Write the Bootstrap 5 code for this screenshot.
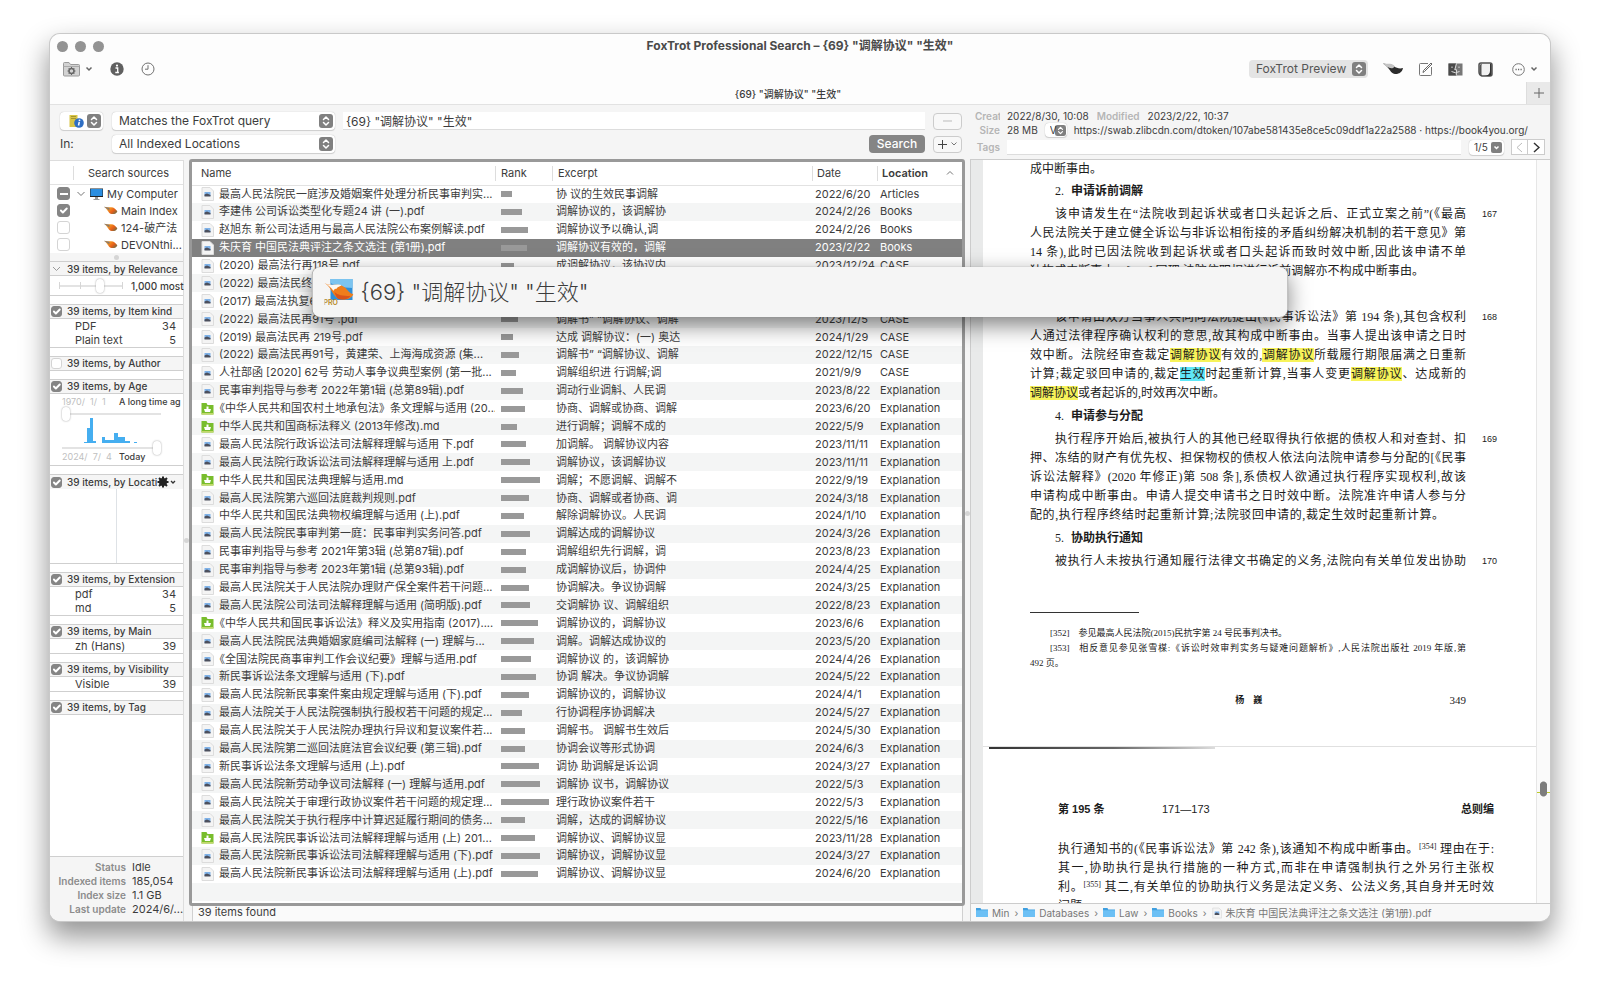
<!DOCTYPE html>
<html lang="zh-Hans">
<head>
<meta charset="utf-8">
<meta name="viewport" content="width=device-width, initial-scale=1">
<title>FoxTrot Professional Search</title>
<link href="https://cdn.jsdelivr.net/npm/bootstrap@5.3.0/dist/css/bootstrap.min.css" rel="stylesheet">
<style>
:root{--ink:#3c3c3c;--line:#cfcfcf;--grey:#8c8c8c}
body{font:11px/14px Inter,"Noto Sans CJK SC",sans-serif;color:var(--ink);background:#fff;height:100vh;padding:34px 50px 66px;overflow:hidden}
svg{display:block;flex:none}
button,input,select{font:inherit;color:inherit}
.app-window{height:100%;background:#f5f5f5;border-radius:10px;box-shadow:0 0 0 1px #c9c9c9,0 14px 28px 2px rgba(0,0,0,.42)}
.clip{border-radius:10px;overflow:hidden;height:100%}
.chrome{background:#fdfdfd;border-bottom:1px solid #e2e2e2}
.title-row{display:grid;grid-template-columns:1fr auto 1fr;height:24px}
.title-row h1{font-size:12px;line-height:16px;font-weight:700;color:#4a4a4a}
.lights{gap:7px;padding-left:7px}
.light{width:11px;height:11px;border-radius:50%;background:#939393}
.tool-row{height:22px;color:#666}
.tool{border:0;background:none;padding:0;display:flex;align-items:center;gap:5px}
.tools-a{gap:17px;padding-left:13px}
.tools-b{gap:15px;padding-right:12px}
.tab-row{height:22px;margin-top:2px}
.tab-name{font-size:10px;font-weight:500;padding-top:2px}
.tab-add{width:24px;height:22px;background:#e9e9e9;border:0;border-left:1px solid #ddd}
.pop{appearance:none;border:0;border-radius:4px;height:18px;padding:0 20px 0 7px;font-size:12px;line-height:18px;background:#fff url("data:image/svg+xml,%3Csvg xmlns='http://www.w3.org/2000/svg' width='14' height='14'%3E%3Crect width='14' height='14' rx='3' fill='%23808080'/%3E%3Cpath d='M4.500 5.500 7 3l2.500 2.500M4.500 8.500 7 11l2.500-2.500' fill='none' stroke='%23fff' stroke-width='1.500' stroke-linecap='round' stroke-linejoin='round'/%3E%3C/svg%3E") no-repeat right 2px center;box-shadow:0 0 1px #aaa,0 1px 1px rgba(0,0,0,.15)}
.pop-tool{width:119px;background-color:#e4e4e4;box-shadow:none;color:#555}
.pop-tiny{width:22px;height:14px;padding:0 0 0 5px;font-size:10px;line-height:14px;background-size:11px 11px;background-position:right 1px center}
.pop-page{width:35px;height:15px;font-size:10px;line-height:15px;padding:0 0 0 5px;background-image:url("data:image/svg+xml,%3Csvg xmlns='http://www.w3.org/2000/svg' width='11' height='11'%3E%3Crect width='11' height='11' rx='2' fill='%23808080'/%3E%3Cpath d='M3.500 4.500 5.500 6.500l2-2' fill='none' stroke='%23fff' stroke-width='1.500'/%3E%3C/svg%3E")}
.pop-icon{width:43px;display:flex;align-items:center;padding:0 0 0 9px}
.field{border:0;border-bottom:1px solid #ddd;border-radius:0;background:#fff;padding:0 3px;height:18px;min-width:0}
.left-side{min-width:0}
.right-side{flex:0 0 39%;min-width:0}
.query{padding:7px 3px 6px 10px;gap:5px}
.query-text{margin:0 8px;font-size:12px}
.btn-find{width:56px;height:18px;padding:0;border:0;border-radius:4px;background:#858585;color:#fff;font-size:12px;line-height:18px;font-weight:500}
.btn-find:hover{background:#777;color:#fff}
.btn-line{width:29px;height:17px;border:1px solid #ccc;border-radius:4px;background:#f8f8f8;padding:0;display:flex;align-items:center;justify-content:center;gap:3px}
.w-lead{width:43px;font-size:12px}
.w-pop{width:223px;margin-left:9px}
.sidebar{width:134px;background:#fff;border-right:1px solid #ddd;margin-top:1px}
.sources-head{height:25px;border-bottom:1px solid #e2e2e2;border-top:1px solid #ddd}
.sources-head .stub{width:24px;border-right:1px solid #ddd;height:14px}
.src{height:17px;padding-left:7px}
.src .twist{margin:0 5px 0 7px}
.src .fox{margin:0 3px 0 34px}
.form-check-input{margin:0;flex:none;float:none;border:1px solid #d4d4d4;border-radius:3px!important;width:13px;height:13px;background-color:#fff}
.form-check-input:checked{background-color:#858585;border-color:#858585;background-size:13px 13px;background-position:center}
.form-check-input.some:checked{background-image:linear-gradient(#fff,#fff);background-size:8px 2px;background-position:center}
.form-check-input.tiny{width:11px;height:11px}
.splitter{height:8px;background:#f5f5f5}
.dot{width:5px;height:5px;border-radius:50%;background:#d5d5d5}
.facet{border-bottom:1px solid var(--line);margin-bottom:8px}
.facet-head{height:15px;border-top:1px solid var(--line);border-bottom:1px solid var(--line);background:#f5f5f5;padding-left:1px;gap:5px;white-space:nowrap;overflow:hidden;font-size:10px;font-weight:500}
.facet-head label{line-height:13px}
.facet-head .tool{margin-left:-5px;gap:0}
.facet dl{margin:0;padding:0 7px 0 25px}
.facet dl div{display:flex;justify-content:space-between;height:14px}
.facet dt,.facet dd{font-weight:400;margin:0}
.limit{height:19px;padding-left:9px;gap:8px;font-size:10px;font-weight:500}
.slide{appearance:none;background:linear-gradient(#e3e3e3,#e3e3e3) center/100% 2px no-repeat;height:14px;margin:0;padding:0;display:block}
.slide::-webkit-slider-thumb{appearance:none;width:8px;height:14px;border-radius:4px;background:#fff;box-shadow:0 0 2px #999}
.slide-ticks{width:64px;background:linear-gradient(#d6d6d6,#d6d6d6) left/1px 7px no-repeat,linear-gradient(#d6d6d6,#d6d6d6) 33% 50%/1px 7px no-repeat,linear-gradient(#d6d6d6,#d6d6d6) right/1px 7px no-repeat,linear-gradient(#e3e3e3,#e3e3e3) center/100% 2px no-repeat}
.age{padding:1px 22px 2px 12px;font-size:9px}
.age time{color:#c0c0c0;white-space:pre;width:57px;flex:none}
.age span{white-space:nowrap;font-weight:500}
.age>div{height:12px;line-height:14px}
.age>div:last-child{height:8px;line-height:4px}
.age svg{margin:-3px 0}
.loc-pane{height:74px}
.status{background:#f5f5f5;border-top:1px solid var(--line);padding:3px 0 5px 2px;display:grid;grid-template-columns:74px 1fr;column-gap:6px;margin:0;white-space:nowrap}
.status dt{color:var(--grey);font-weight:600;font-size:10px;text-align:right}
.status dd{margin:0}
.gutter{width:6px}
.results{border:3px solid #999;border-radius:3px;background:#fff;padding-bottom:2px;min-height:0}
.hits{table-layout:fixed;height:100%;margin:0;color:inherit;width:100%}
.hits>:not(caption)>*>*{padding:0 0 0 4px;background:none;border:0;box-shadow:none;color:inherit;white-space:nowrap;overflow:hidden;vertical-align:middle;line-height:15px}
.hits>thead>tr>th{height:23px;padding-left:5px;border-bottom:1px solid #e2e2e2;font-weight:400;background:linear-gradient(#ddd,#ddd) left/1px 15px no-repeat}
.hits>thead>tr>th:nth-child(2),.hits>thead>tr>th:nth-child(3){padding-left:6px}
.hits>thead>tr>th:first-child{padding-left:9px;background:none}
.hits>tbody>tr>td{height:17px}
.hits>tbody>tr>td:first-child{padding-left:9px}
.hits>tbody>tr>td:nth-child(2){padding-left:6px}
.hits>tbody>tr>td:nth-child(4){padding-left:3px}
.hits>tbody>tr>td:nth-child(5){padding-left:3px}
.hits tbody tr:nth-child(even){background:#f4f5f5}
.hits tbody tr.picked{background:#808080;color:#fff}
.hits .nm{display:flex;align-items:center;gap:5px}
.hits .nm.book{gap:0}
.hits .bar{height:6px;background:#999}
.foot{height:15px;background:#fafafa;border:solid #d0d0d0;border-width:0 1px;margin:0 2px 0 3px;padding:0 5px;line-height:13px}
.meta{padding:4px 5px 0 5px;height:54px;font-size:10px;white-space:nowrap}
.meta .lab{width:25px;color:#b5b5b5;font-weight:600;text-align:right;overflow:hidden;flex:none}
.meta .field{height:15px}
.nav-sq{width:17px;height:16px;border:1px solid #ccc;background:#fff;padding:0;display:flex;align-items:center;justify-content:center}
.viewer{border-top:1px solid #ccc;border-left:1px solid #ccc;background:#e9eaea;padding-left:12px;min-height:0;overflow:hidden}
.sheets{min-width:0;height:0;min-height:100%}
.sheet{background:#fff;font:400 12px/19px "Liberation Serif","Noto Sans CJK SC",serif;color:#1c1c1c}
.sheet-a{padding:0 0 0 47px;height:587px;border-bottom:1px solid #e0e0e0}
.sheet-b{padding:0 42px 0 75px}
.cols{display:grid;grid-template-columns:minmax(0,1fr) 54px 16px}
.cols>b{font:500 9px/19px "Liberation Sans",sans-serif;padding-left:16px}
.ln{display:block;white-space:nowrap;text-align:justify;text-align-last:justify}
.ln-end{display:block;white-space:nowrap}
.ln-top{line-height:18px}
.ind{padding-left:25px}
.sheet h2{font-size:12px;line-height:19px;font-weight:700;margin:4px 0;padding-left:25px}
.sheet h2 i{font-style:normal;font-weight:400;margin-right:4px}
.hl{background:#f7f35a}.hl2{background:#5fe7f7}
.note{font-size:9px;line-height:15px;margin-top:41px}
.note hr{width:109px;border:0;border-top:1px solid #333;opacity:1;margin:0 0 13px}
.note .ind{padding-left:20px}
.folio{margin-top:22px}
.folio b{padding-left:18px}
.folio em{font-style:normal;font-size:11px}
.sheet sup{font-size:8px;line-height:0}
.scan{height:2px;width:226px;margin-left:6px;background:linear-gradient(90deg,#333,#666 55%,#ddd)}
.run-head{font-size:11px;padding-top:51px}
.run-head span,.run-head strong{font-family:"Liberation Sans","Noto Sans CJK SC",sans-serif}
.run-head strong:first-child{width:104px}
.track{width:14px;background:#fafafa;border-left:1px solid #e6e6e6}
.before{flex:621}.after{flex:106}
.thumb{width:100%;height:16px;background:radial-gradient(#7d7d7d,#7d7d7d) center/7px 10px no-repeat,radial-gradient(circle at 50% 4px,#7d7d7d 3px,transparent 4px),radial-gradient(circle at 50% 12px,#7d7d7d 3px,transparent 4px),linear-gradient(#bccb2c,#bccb2c) 0 11px/100% 1px no-repeat}
.crumbs{height:18px;border-top:1px solid #ccc;border-left:1px solid #ccc;background:#f8f8f8;color:#777;padding-left:5px;gap:5px;font-size:10px}
.crumbs a{color:inherit;text-decoration:none;display:flex;align-items:center;gap:4px}
.banner{left:50%;top:233px;width:65%;height:50px;transform:translateX(-50%);background:#f5f5f5;border-radius:8px;box-shadow:0 0 1px #888,0 8px 22px rgba(0,0,0,.5);padding-left:12px;gap:7px;font-size:22px;line-height:34px;font-weight:300}
</style>
</head>
<body>
<svg width="0" height="0" class="position-absolute" aria-hidden="true">
<defs>
<linearGradient id="fg" x1="0" y1="0" x2="1" y2=".6"><stop offset=".1" stop-color="#a9906f"/><stop offset=".4" stop-color="#f5941f"/><stop offset=".75" stop-color="#e65f1a"/><stop offset="1" stop-color="#8a6a3a"/></linearGradient>
<symbol id="pdf" viewBox="0 0 13 14"><path d="M1 .5h8L12.500 4v9.500H1z" fill="#f4f4f4" stroke="#dcdcdc"/><path d="M3.500 5h6v4h-6z" fill="#7fb2e8"/><path d="M3.500 7.500 6 6.500l3.500 1.500v1.500h-6z" fill="#4b4f5c"/></symbol>
<symbol id="md" viewBox="0 0 13 14"><path d="M.5 1h5l1 2h6v9.500H.5z" fill="#78bd2c"/><path d="M.5 11h12v1.500H.5z" fill="#c3d86a"/><path d="M5.500 4.500h2v2.500h2.500l-1 3H4L3 7h2.500z" fill="#fff"/></symbol>
<symbol id="fox" viewBox="0 0 22 14"><path d="M0 1c5 1 7 1 11 1 5 0 7 3 10 6-1 4-5 5-9 4.500C7 12 7 6 0 1z" fill="url(#fg)"/><path d="M0 1c4 1 7 1 9 2L8 7C6 5 4 3 0 1z" fill="#8d7a68"/></symbol>
<symbol id="dir" viewBox="0 0 16 14"><path d="M0 1h6l1 2h9v10H0z" fill="#3f9fe0"/><path d="M0 4h16v9H0z" fill="#6cc0f5"/></symbol>
</defs>
</svg>

<main class="app-window position-relative">
<div class="clip d-flex flex-column">
<header class="chrome">
  <div class="title-row align-items-center">
    <div class="lights d-flex"><span class="light"></span><span class="light"></span><span class="light"></span></div>
    <h1 class="m-0">FoxTrot Professional Search – {69} "调解协议" "生效"</h1>
    <div></div>
  </div>
  <div class="tool-row d-flex align-items-center justify-content-between">
    <div class="tools-a d-flex align-items-center">
      <button class="tool" aria-label="Folder actions"><svg width="17" height="15" viewBox="0 0 17 15"><path d="M.5 3V1.500Q.5.500 1.500.5H6l1.500 2h8q1 0 1 1V13q0 1-1 1h-14q-1 0-1-1z" fill="#d2d2d2" stroke="#9a9a9a"/><path d="M.5 4.500h16" stroke="#aaa"/><circle cx="8.500" cy="9" r="2.500" fill="none" stroke="#666" stroke-width="1.500"/><path d="M8.500 5v8M4.500 9h8M5.700 6.200l5.600 5.600M11.300 6.200l-5.600 5.600" stroke="#666" stroke-dasharray="1.500 5"/></svg><svg width="8" height="6" viewBox="0 0 8 6"><path d="m1.500 1.500 2.500 2.500 2.500-2.500" fill="none" stroke="#666" stroke-width="1.500"/></svg></button>
      <button class="tool" aria-label="Info"><svg width="14" height="14" viewBox="0 0 14 14"><circle cx="7" cy="7" r="6.700" fill="#606060"/><path d="M5.500 6h2.200v4.200M5.300 10.500h3.600" stroke="#fff" stroke-width="1.300" fill="none"/><circle cx="7" cy="3.600" r="1.100" fill="#fff"/></svg></button>
      <button class="tool" aria-label="History"><svg width="14" height="14" viewBox="0 0 14 14"><circle cx="7" cy="7" r="6" fill="none" stroke="#707070"/><path d="M7 3.200V7.200H4" fill="none" stroke="#707070"/></svg></button>
    </div>
    <div class="tools-b d-flex align-items-center">
      <select class="pop pop-tool" aria-label="Viewer"><option>FoxTrot Preview</option></select>
      <button class="tool" aria-label="FoxTrot"><svg width="20" height="14" viewBox="0 0 22 14"><path d="M0 1c5 1 8 0 12 3 3 2 6 3 10 2-1 5-5 7-9 6.500C8 12 8 6 0 1z" fill="#2c2c2c"/><path d="M0 1c5 1 8-1 12 2 1 1 1 2-1 3C7 7 3 4 0 1z" fill="#c4c4c4"/></svg></button>
      <button class="tool" aria-label="Edit"><svg width="15" height="15" viewBox="0 0 15 15"><path d="M10 1.500H2.500q-1 0-1 1v10q0 1 1 1h10q1 0 1-1V5" fill="none" stroke="#777"/><path d="M5 10.500 5.500 8.500 13 1l1 1-7.500 7.500z" fill="none" stroke="#666"/></svg></button>
      <button class="tool" aria-label="Reveal in Finder"><svg width="15" height="15" viewBox="0 0 15 15"><path d="M.5 1.500h14v12H.5z" fill="#777"/><path d="M.5 1.500H8L6.500 8H8v5.500H.5z" fill="#4a4a4a"/><path d="M4 4.500V6M11 4.500V6M3.500 9.500q4 2.500 8 0M8.500 1.500 6.800 7.700h1.700L8.300 13" fill="none" stroke="#ddd"/></svg></button>
      <button class="tool" aria-label="Application"><svg width="15" height="15" viewBox="0 0 15 15"><path d="M3 1h9q2 0 2 2v9q0 2-2 2H4q-3-1-3-4V3q0-2 2-2z" fill="#f1f1f1" stroke="#505050" stroke-width="1.500"/><path d="M12 1.500q1.500.5 1.500 2v8q0 2.500-2.500 2.500H5q7 0 7-5z" fill="#333"/><path d="M4 1.500Q1.500 2 1.500 5v5q0 2 2 3.500V4q0-1.500.5-2.500z" fill="#555"/></svg></button>
      <button class="tool ms-1" aria-label="More"><svg width="13" height="13" viewBox="0 0 13 13"><circle cx="6.500" cy="6.500" r="5.800" fill="none" stroke="#777"/><path d="M3.500 6.500h1.200M6 6.500h1.200M8.500 6.500h1.200" stroke="#666" stroke-width="1.300"/></svg><svg width="8" height="6" viewBox="0 0 8 6"><path d="m1.500 1.500 2.500 2.500 2.500-2.500" fill="none" stroke="#666" stroke-width="1.500"/></svg></button>
    </div>
  </div>
  <div class="tab-row d-flex align-items-center">
    <div class="tab-name flex-grow-1 text-center">{69} "调解协议" "生效"</div>
    <button class="tab-add d-flex align-items-center justify-content-center" aria-label="New tab"><svg width="10" height="10"><path d="M5 0v10M0 5h10" stroke="#666"/></svg></button>
  </div>
</header>

<div class="d-flex flex-grow-1" style="min-height:0">
<section class="left-side d-flex flex-column flex-grow-1">
  <form class="query d-flex flex-column">
    <div class="d-flex align-items-center">
      <button type="button" class="pop pop-icon" aria-label="Query kind"><svg width="15" height="15" viewBox="0 0 15 15"><path d="M.5 1h8v12h-8z" fill="#d9c648"/><path d="M2 2.500h5M2 4.500h5" stroke="#a59530"/><circle cx="10" cy="9" r="4.800" fill="#2f6fc4"/><path d="M10.300 8 9.500 11.500" stroke="#fff" stroke-width="1.500"/><circle cx="10.500" cy="6.300" r=".9" fill="#fff"/></svg></button>
      <select class="pop w-pop" aria-label="Match type"><option>Matches the FoxTrot query</option></select>
      <input class="field query-text flex-grow-1" aria-label="Query" value='{69} "调解协议" "生效"'>
      <button type="button" class="btn-line" aria-label="Remove condition"><svg width="9" height="2"><path d="M0 1h9" stroke="#bbb"/></svg></button>
    </div>
    <div class="d-flex align-items-center">
      <label for="where" class="w-lead">In:</label>
      <select id="where" class="pop w-pop"><option>All Indexed Locations</option></select>
      <button type="submit" class="btn btn-find ms-auto">Search</button>
      <button type="button" class="btn-line ms-2" aria-label="Add condition"><svg width="9" height="9"><path d="M4.500 0v9M0 4.500h9" stroke="#444"/></svg><svg width="8" height="6" viewBox="0 0 8 6"><path d="m1.500 1.500 2.500 2.500 2.500-2.500" fill="none" stroke="#777"/></svg></button>
    </div>
  </form>

  <div class="d-flex flex-grow-1" style="min-height:0">
  <aside class="sidebar d-flex flex-column">
    <div class="sources-head d-flex align-items-center flex-shrink-0"><span class="stub"></span><span class="flex-grow-1 text-center">Search sources</span></div>
    <div class="src d-flex align-items-center"><input type="checkbox" class="form-check-input some" id="s1" checked><svg class="twist" width="8" height="6" viewBox="0 0 8 6"><path d="m.5 1 3.500 3.500L7.500 1" fill="none" stroke="#777"/></svg><svg width="13" height="12" viewBox="0 0 13 12"><path d="M0 .5h13v8.500H0z" fill="#222"/><path d="M.5 1h12v7H.5z" fill="#2b8ee0"/><path d="M5 9h3v2H5zM3.500 11h6v1h-6z" fill="#999"/></svg><label for="s1" class="ms-1">My Computer</label></div>
    <div class="src d-flex align-items-center"><input type="checkbox" class="form-check-input" id="s2" checked><svg class="fox" width="14" height="9"><use href="#fox"/></svg><label for="s2">Main Index</label></div>
    <div class="src d-flex align-items-center"><input type="checkbox" class="form-check-input" id="s3"><svg class="fox" width="14" height="9"><use href="#fox"/></svg><label for="s3" class="text-nowrap">124-破产法</label></div>
    <div class="src d-flex align-items-center"><input type="checkbox" class="form-check-input" id="s4"><svg class="fox" width="14" height="9"><use href="#fox"/></svg><label for="s4">DEVONthi...</label></div>
    <div class="splitter d-flex align-items-center justify-content-center flex-shrink-0"><span class="dot"></span></div>

    <div class="facet"><div class="facet-head d-flex align-items-center"><svg width="11" height="6" viewBox="0 0 11 6"><path d="m2 1 3.500 3.500L9 1" fill="none" stroke="#999"/></svg><span>39 items, by Relevance</span></div>
      <div class="limit d-flex align-items-center text-nowrap"><input type="range" class="slide slide-ticks" aria-label="Result limit" value="66"><span>1,000 most</span></div></div>
    <div class="facet"><div class="facet-head d-flex align-items-center"><input type="checkbox" class="form-check-input tiny" id="f1" checked><label for="f1">39 items, by Item kind</label></div>
      <dl><div><dt>PDF</dt><dd>34</dd></div><div><dt>Plain text</dt><dd>5</dd></div></dl></div>
    <div class="facet border-bottom-0"><div class="facet-head d-flex align-items-center"><input type="checkbox" class="form-check-input tiny" id="f2"><label for="f2">39 items, by Author</label></div></div>
    <div class="facet"><div class="facet-head d-flex align-items-center"><input type="checkbox" class="form-check-input tiny" id="f3" checked><label for="f3">39 items, by Age</label></div>
      <div class="age"><div class="d-flex"><time>1970/  1/  1</time><span>A long time ag</span></div>
        <input type="range" class="slide w-100" aria-label="From" value="0">
        <svg width="99" height="26" viewBox="0 0 99 26" fill="#45aef0"><path d="M22 24h3v1h-3zM25 10h3v15h-3zM28 0h3v25h-3zM31 23h3v2h-3zM40 19h3v6h-3zM43 22h9v3h-9zM52 15h4v10h-4zM56 19h7v6h-7zM63 23h5v2h-5zM72 24h3v1h-3z"/></svg>
        <input type="range" class="slide w-100" aria-label="To" value="100">
        <div class="d-flex"><time>2024/  7/  4</time><span>Today</span></div></div></div>
    <div class="facet"><div class="facet-head d-flex align-items-center border-bottom-0"><input type="checkbox" class="form-check-input tiny" id="f4" checked><label for="f4">39 items, by Locati</label><button class="tool" aria-label="Location options"><svg width="12" height="12" viewBox="0 0 12 12"><circle cx="6" cy="6" r="4" fill="#222"/><path d="M6 .5v11M.5 6h11M2 2l8 8M10 2l-8 8" stroke="#222" stroke-width="2"/></svg><svg width="8" height="6" viewBox="0 0 8 6"><path d="m2 2 2 2 2-2" fill="none" stroke="#333" stroke-width="1.300"/></svg></button></div>
      <div class="loc-pane d-flex"><div class="w-50 border-end"></div></div></div>
    <div class="facet"><div class="facet-head d-flex align-items-center"><input type="checkbox" class="form-check-input tiny" id="f5" checked><label for="f5">39 items, by Extension</label></div>
      <dl><div><dt>pdf</dt><dd>34</dd></div><div><dt>md</dt><dd>5</dd></div></dl></div>
    <div class="facet"><div class="facet-head d-flex align-items-center"><input type="checkbox" class="form-check-input tiny" id="f6" checked><label for="f6">39 items, by Main</label></div>
      <dl><div><dt>zh (Hans)</dt><dd>39</dd></div></dl></div>
    <div class="facet"><div class="facet-head d-flex align-items-center"><input type="checkbox" class="form-check-input tiny" id="f7" checked><label for="f7">39 items, by Visibility</label></div>
      <dl><div><dt>Visible</dt><dd>39</dd></div></dl></div>
    <div class="facet border-bottom-0"><div class="facet-head d-flex align-items-center"><input type="checkbox" class="form-check-input tiny" id="f8" checked><label for="f8">39 items, by Tag</label></div></div>
    <dl class="status mt-auto"><dt>Status</dt><dd>Idle</dd><dt>Indexed items</dt><dd>185,054</dd><dt>Index size</dt><dd>1.1 GB</dd><dt>Last update</dt><dd>2024/6/...</dd></dl>
  </aside>
  <div class="gutter d-flex align-items-center justify-content-center"><span class="dot"></span></div>

  <div class="d-flex flex-column flex-grow-1" style="min-width:0">
  <div class="results flex-grow-1">
  <table class="table hits">
    <colgroup><col style="width:303px"><col style="width:57px"><col><col style="width:65px"><col style="width:85px"></colgroup>
    <thead><tr><th>Name</th><th>Rank</th><th>Excerpt</th><th>Date</th><th><span class="d-flex justify-content-between align-items-center pe-2"><span class="fw-semibold">Location</span><svg width="8" height="6" viewBox="0 0 8 6"><path d="m1 4.500 3-3 3 3" fill="none" stroke="#777"/></svg></span></th></tr></thead>
    <tbody>
<tr><td><div class="nm"><svg width="13" height="14"><use href="#pdf"/></svg>最高人民法院民一庭涉及婚姻案件处理分析民事审判实...</div></td><td><div class="bar" style="width:11px"></div></td><td>协 议的生效民事调解</td><td>2022/6/20</td><td>Articles</td></tr>
<tr><td><div class="nm"><svg width="13" height="14"><use href="#pdf"/></svg>李建伟 公司诉讼类型化专题24 讲 (一).pdf</div></td><td><div class="bar" style="width:21px"></div></td><td>调解协议的，该调解协</td><td>2024/2/26</td><td>Books</td></tr>
<tr><td><div class="nm"><svg width="13" height="14"><use href="#pdf"/></svg>赵旭东 新公司法适用与最高人民法院公布案例解读.pdf</div></td><td><div class="bar" style="width:27px"></div></td><td>调解协议予以确认,调</td><td>2024/2/26</td><td>Books</td></tr>
<tr class="picked"><td><div class="nm"><svg width="13" height="14"><use href="#pdf"/></svg>朱庆育 中国民法典评注之条文选注 (第1册).pdf</div></td><td><div class="bar" style="width:26px"></div></td><td>调解协议有效的，调解</td><td>2023/2/22</td><td>Books</td></tr>
<tr><td><div class="nm"><svg width="13" height="14"><use href="#pdf"/></svg>(2020) 最高法行再118号.pdf</div></td><td><div class="bar" style="width:13px"></div></td><td>成调解协议，该协议内</td><td>2023/12/24</td><td>CASE</td></tr>
<tr><td><div class="nm"><svg width="13" height="14"><use href="#pdf"/></svg>(2022) 最高法民终</div></td><td></td><td></td><td></td><td></td></tr>
<tr><td><div class="nm"><svg width="13" height="14"><use href="#pdf"/></svg>(2017) 最高法执复6</div></td><td></td><td></td><td></td><td></td></tr>
<tr><td><div class="nm"><svg width="13" height="14"><use href="#pdf"/></svg>(2022) 最高法民再91号 .pdf</div></td><td><div class="bar" style="width:17px"></div></td><td>调解书” “调解协议、调解</td><td>2023/12/5</td><td>CASE</td></tr>
<tr><td><div class="nm"><svg width="13" height="14"><use href="#pdf"/></svg>(2019) 最高法民再 219号.pdf</div></td><td><div class="bar" style="width:12px"></div></td><td>达成 调解协议：(一) 奥达</td><td>2024/1/29</td><td>CASE</td></tr>
<tr><td><div class="nm"><svg width="13" height="14"><use href="#pdf"/></svg>(2022) 最高法民再91号，黄建荣、上海海成资源 (集...</div></td><td><div class="bar" style="width:18px"></div></td><td>调解书” “调解协议、调解</td><td>2022/12/15</td><td>CASE</td></tr>
<tr><td><div class="nm"><svg width="13" height="14"><use href="#pdf"/></svg>人社部函 [2020] 62号 劳动人事争议典型案例 (第一批...</div></td><td><div class="bar" style="width:15px"></div></td><td>调解组织进 行调解;调</td><td>2021/9/9</td><td>CASE</td></tr>
<tr><td><div class="nm"><svg width="13" height="14"><use href="#pdf"/></svg>民事审判指导与参考 2022年第1辑 (总第89辑).pdf</div></td><td><div class="bar" style="width:22px"></div></td><td>调动行业调斛、人民调</td><td>2023/8/22</td><td>Explanation</td></tr>
<tr><td><div class="nm book"><svg width="13" height="14"><use href="#md"/></svg>《中华人民共和国农村土地承包法》条文理解与适用 (20...</div></td><td><div class="bar" style="width:24px"></div></td><td>协商、调解或协商、调解</td><td>2023/6/20</td><td>Explanation</td></tr>
<tr><td><div class="nm"><svg width="13" height="14"><use href="#md"/></svg>中华人民共和国商标法释义 (2013年修改).md</div></td><td><div class="bar" style="width:16px"></div></td><td>进行调解；调解不成的</td><td>2022/5/9</td><td>Explanation</td></tr>
<tr><td><div class="nm"><svg width="13" height="14"><use href="#pdf"/></svg>最高人民法院行政诉讼法司法解释理解与适用 下.pdf</div></td><td><div class="bar" style="width:25px"></div></td><td>加调解。 调解协议内容</td><td>2023/11/11</td><td>Explanation</td></tr>
<tr><td><div class="nm"><svg width="13" height="14"><use href="#pdf"/></svg>最高人民法院行政诉讼法司法解释理解与适用 上.pdf</div></td><td><div class="bar" style="width:29px"></div></td><td>调解协议，该调解协议</td><td>2023/11/11</td><td>Explanation</td></tr>
<tr><td><div class="nm"><svg width="13" height="14"><use href="#md"/></svg>中华人民共和国民法典理解与适用.md</div></td><td><div class="bar" style="width:39px"></div></td><td>调解；不愿调解、调解不</td><td>2022/9/19</td><td>Explanation</td></tr>
<tr><td><div class="nm"><svg width="13" height="14"><use href="#pdf"/></svg>最高人民法院第六巡回法庭裁判规则.pdf</div></td><td><div class="bar" style="width:28px"></div></td><td>协商、调解或者协商、调</td><td>2024/3/18</td><td>Explanation</td></tr>
<tr><td><div class="nm"><svg width="13" height="14"><use href="#pdf"/></svg>中华人民共和国民法典物权编理解与适用 (上).pdf</div></td><td><div class="bar" style="width:23px"></div></td><td>解除调解协议。人民调</td><td>2024/1/10</td><td>Explanation</td></tr>
<tr><td><div class="nm"><svg width="13" height="14"><use href="#pdf"/></svg>最高人民法院民事审判第一庭：民事审判实务问答.pdf</div></td><td><div class="bar" style="width:29px"></div></td><td>调解达成的调解协议</td><td>2024/3/26</td><td>Explanation</td></tr>
<tr><td><div class="nm"><svg width="13" height="14"><use href="#pdf"/></svg>民事审判指导与参考 2021年第3辑 (总第87辑).pdf</div></td><td><div class="bar" style="width:25px"></div></td><td>调解组织先行调解，调</td><td>2023/8/23</td><td>Explanation</td></tr>
<tr><td><div class="nm"><svg width="13" height="14"><use href="#pdf"/></svg>民事审判指导与参考 2023年第1辑 (总第93辑).pdf</div></td><td><div class="bar" style="width:25px"></div></td><td>成调解协议后，协调仲</td><td>2024/4/25</td><td>Explanation</td></tr>
<tr><td><div class="nm"><svg width="13" height="14"><use href="#pdf"/></svg>最高人民法院关于人民法院办理财产保全案件若干问题...</div></td><td><div class="bar" style="width:28px"></div></td><td>协调解决。争议协调解</td><td>2024/3/25</td><td>Explanation</td></tr>
<tr><td><div class="nm"><svg width="13" height="14"><use href="#pdf"/></svg>最高人民法院公司法司法解释理解与适用 (简明版).pdf</div></td><td><div class="bar" style="width:29px"></div></td><td>交调解协 议、调解组织</td><td>2022/8/23</td><td>Explanation</td></tr>
<tr><td><div class="nm book"><svg width="13" height="14"><use href="#md"/></svg>《中华人民共和国民事诉讼法》释义及实用指南 (2017)....</div></td><td><div class="bar" style="width:37px"></div></td><td>调解协议的，调解协议</td><td>2023/6/6</td><td>Explanation</td></tr>
<tr><td><div class="nm"><svg width="13" height="14"><use href="#pdf"/></svg>最高人民法院民法典婚姻家庭编司法解释 (一) 理解与...</div></td><td><div class="bar" style="width:33px"></div></td><td>调解。调解达成协议的</td><td>2023/5/20</td><td>Explanation</td></tr>
<tr><td><div class="nm book"><svg width="13" height="14"><use href="#pdf"/></svg>《全国法院民商事审判工作会议纪要》理解与适用.pdf</div></td><td><div class="bar" style="width:30px"></div></td><td>调解协议 的，该调解协</td><td>2024/4/26</td><td>Explanation</td></tr>
<tr><td><div class="nm"><svg width="13" height="14"><use href="#pdf"/></svg>新民事诉讼法条文理解与适用 (下).pdf</div></td><td><div class="bar" style="width:35px"></div></td><td>协调 解决。争议协调解</td><td>2024/5/22</td><td>Explanation</td></tr>
<tr><td><div class="nm"><svg width="13" height="14"><use href="#pdf"/></svg>最高人民法院新民事案件案由规定理解与适用 (下).pdf</div></td><td><div class="bar" style="width:28px"></div></td><td>调解协议的，调解协议</td><td>2024/4/1</td><td>Explanation</td></tr>
<tr><td><div class="nm"><svg width="13" height="14"><use href="#pdf"/></svg>最高人法院关于人民法院强制执行股权若干问题的规定...</div></td><td><div class="bar" style="width:21px"></div></td><td>行协调程序协调解决</td><td>2024/5/27</td><td>Explanation</td></tr>
<tr><td><div class="nm"><svg width="13" height="14"><use href="#pdf"/></svg>最高人民法院关于人民法院办理执行异议和复议案件若...</div></td><td><div class="bar" style="width:24px"></div></td><td>调解书。 调解书生效后</td><td>2024/5/30</td><td>Explanation</td></tr>
<tr><td><div class="nm"><svg width="13" height="14"><use href="#pdf"/></svg>最高人民法院第二巡回法庭法官会议纪要 (第三辑).pdf</div></td><td><div class="bar" style="width:24px"></div></td><td>协调会议等形式协调</td><td>2024/6/3</td><td>Explanation</td></tr>
<tr><td><div class="nm"><svg width="13" height="14"><use href="#pdf"/></svg>新民事诉讼法条文理解与适用 (上).pdf</div></td><td><div class="bar" style="width:38px"></div></td><td>调协 助调解是诉讼调</td><td>2024/3/27</td><td>Explanation</td></tr>
<tr><td><div class="nm"><svg width="13" height="14"><use href="#pdf"/></svg>最高人民法院新劳动争议司法解释 (一) 理解与适用.pdf</div></td><td><div class="bar" style="width:39px"></div></td><td>调解协 议书，调解协议</td><td>2022/5/3</td><td>Explanation</td></tr>
<tr><td><div class="nm"><svg width="13" height="14"><use href="#pdf"/></svg>最高人民法院关于审理行政协议案件若干问题的规定理...</div></td><td><div class="bar" style="width:48px"></div></td><td>理行政协议案件若干</td><td>2022/5/3</td><td>Explanation</td></tr>
<tr><td><div class="nm"><svg width="13" height="14"><use href="#pdf"/></svg>最高人民法院关于执行程序中计算迟延履行期间的债务...</div></td><td><div class="bar" style="width:24px"></div></td><td>调解，达成的调解协议</td><td>2022/5/16</td><td>Explanation</td></tr>
<tr><td><div class="nm"><svg width="13" height="14"><use href="#md"/></svg>最高人民法院民事诉讼法司法解释理解与适用 (上) 201...</div></td><td><div class="bar" style="width:34px"></div></td><td>调解协议、调解协议显</td><td>2023/11/28</td><td>Explanation</td></tr>
<tr><td><div class="nm"><svg width="13" height="14"><use href="#pdf"/></svg>最高人民法院新民事诉讼法司法解释理解与适用 (下).pdf</div></td><td><div class="bar" style="width:39px"></div></td><td>调解协议，调解协议显</td><td>2024/3/27</td><td>Explanation</td></tr>
<tr><td><div class="nm"><svg width="13" height="14"><use href="#pdf"/></svg>最高人民法院新民事诉讼法司法解释理解与适用 (上).pdf</div></td><td><div class="bar" style="width:37px"></div></td><td>调解协议、调解协议显</td><td>2024/6/20</td><td>Explanation</td></tr>
<tr><td>&nbsp;</td><td></td><td></td><td></td><td></td></tr>
    </tbody>
  </table>
  </div>
  <div class="foot">39 items found</div>
  </div>
  </div>
</section>

<section class="right-side d-flex">
  <div class="d-flex align-items-center" style="width:5px"><span class="dot"></span></div>
  <div class="d-flex flex-column flex-grow-1" style="min-width:0">
    <div class="meta">
      <div class="d-flex"><span class="lab">Creat</span><span style="margin-left:7px">2022/8/30, 10:08</span><span class="lab w-auto mx-2">Modified</span><span>2023/2/22, 10:37</span></div>
      <div class="d-flex align-items-center"><span class="lab">Size</span><span style="margin:0 7px">28 MB</span><select class="pop pop-tiny" aria-label="Origin"><option>V</option></select><span style="margin-left:7px">https://swab.zlibcdn.com/dtoken/107abe581435e8ce5c09ddf1a22a2588 · https://book4you.org/</span></div>
      <div class="d-flex align-items-center" style="margin-top:2px"><label for="tags" class="lab">Tags</label><input id="tags" class="field flex-grow-1" style="margin:0 8px 0 7px"><select class="pop pop-page" aria-label="Match"><option>1/5</option></select><button class="nav-sq" style="margin-left:7px" aria-label="Previous"><svg width="7" height="11"><path d="M6 1 1 5.500 6 10" fill="none" stroke="#bbb"/></svg></button><button class="nav-sq border-start-0" aria-label="Next"><svg width="7" height="11"><path d="M1 1 6 5.500 1 10" fill="none" stroke="#333" stroke-width="1.500"/></svg></button></div>
    </div>
    <div class="viewer d-flex flex-grow-1">
      <div class="sheets flex-grow-1">
        <article class="sheet sheet-a">
          <div class="cols">
            <div><span class="ln-end ln-top">成中断事由。</span><h2><i>2.</i> 申请诉前调解</h2></div><b></b><i></i>
            <div><span class="ln ind">该申请发生在“法院收到起诉状或者口头起诉之后、正式立案之前”(《最高</span><span class="ln">人民法院关于建立健全诉讼与非诉讼相衔接的矛盾纠纷解决机制的若干意见》第</span><span class="ln">14 条),此时已因法院收到起诉状或者口头起诉而致时效中断,因此该申请不单</span><span class="ln" style="margin-right:42px">独构成中断事由。[351] 同理,法院依职权进行诉前调解亦不构成中断事由。</span><h2><i>3.</i> &nbsp;</h2></div><b>167</b><i></i>
            <div><span class="ln ind">该申请由双方当事人共同向法院提出(《民事诉讼法》第 194 条),其包含权利</span><span class="ln">人通过法律程序确认权利的意思,故其构成中断事由。当事人提出该申请之日时</span><span class="ln">效中断。法院经审查裁定<span class="hl">调解协议</span>有效的,<span class="hl">调解协议</span>所载履行期限届满之日重新</span><span class="ln">计算;裁定驳回申请的,裁定<span class="hl2">生效</span>时起重新计算,当事人变更<span class="hl">调解协议</span>、达成新的</span><span class="ln-end"><span class="hl">调解协议</span>或者起诉的,时效再次中断。</span><h2><i>4.</i> 申请参与分配</h2></div><b>168</b><i></i>
            <div><span class="ln ind">执行程序开始后,被执行人的其他已经取得执行依据的债权人和对查封、扣</span><span class="ln">押、冻结的财产有优先权、担保物权的债权人依法向法院申请参与分配的[《民事</span><span class="ln">诉讼法解释》(2020 年修正)第 508 条],系债权人欲通过执行程序实现权利,故该</span><span class="ln">申请构成中断事由。申请人提交申请书之日时效中断。法院准许申请人参与分</span><span class="ln" style="margin-right:22px">配的,执行程序终结时起重新计算;法院驳回申请的,裁定生效时起重新计算。</span><h2><i>5.</i> 协助执行通知</h2></div><b>169</b><i></i>
            <div><span class="ln ind">被执行人未按执行通知履行法律文书确定的义务,法院向有关单位发出协助</span></div><b>170</b><i></i>
            <div class="note"><hr><span class="ln-end ind">[352]&emsp;参见最高人民法院(2015)民抗字第 24 号民事判决书。</span><span class="ln ind">[353]&emsp;相反意见参见张雪楳:《诉讼时效审判实务与疑难问题解析》,人民法院出版社 2019 年版,第</span><span class="ln-end">492 页。</span>
              <div class="folio d-flex justify-content-between"><span></span><b>杨&emsp;巍</b><em>349</em></div></div><b></b><i></i>
          </div>
        </article>
        <article class="sheet">
          <div class="scan"></div>
          <div class="sheet-b">
            <div class="run-head d-flex"><strong class="fw-semibold">第 195 条</strong><span class="flex-grow-1">171—173</span><strong>总则编</strong></div>
            <div style="margin-top:21px"><span class="ln">执行通知书的(《民事诉讼法》第 242 条),该通知不构成中断事由。<sup>[354]</sup> 理由在于:</span><span class="ln">其一,协助执行是执行措施的一种方式,而非在申请强制执行之外另行主张权</span><span class="ln">利。<sup>[355]</sup> 其二,有关单位的协助执行义务是法定义务、公法义务,其自身并无时效</span><span class="ln-end">问题。</span></div>
          </div>
        </article>
      </div>
      <div class="track d-flex flex-column align-items-center flex-shrink-0"><div class="before"></div><div class="thumb flex-shrink-0"></div><div class="after"></div></div>
    </div>
    <nav class="crumbs d-flex align-items-center text-nowrap" aria-label="Path">
      <a href="#"><svg width="12" height="11"><use href="#dir"/></svg>Min</a>›
      <a href="#"><svg width="12" height="11"><use href="#dir"/></svg>Databases</a>›
      <a href="#"><svg width="12" height="11"><use href="#dir"/></svg>Law</a>›
      <a href="#"><svg width="12" height="11"><use href="#dir"/></svg>Books</a>›
      <a href="#"><svg width="10" height="12"><use href="#pdf"/></svg>朱庆育 中国民法典评注之条文选注 (第1册).pdf</a>
    </nav>
  </div>
</section>
</div>
</div>
<div class="banner position-absolute d-flex align-items-center text-nowrap">
  <svg width="29" height="28" viewBox="0 0 29 28"><path d="M6 1h22v21H6z" fill="#2f8fd8"/><path d="M6 1h22v9L14 9 6 5z" fill="#7cc4ef"/><path d="M0 5c7 4 12 0 18 3 5 2 6 8 11 8-3 6-9 6-14 5C8 19 8 10 0 5z" fill="#ef7d1b"/><path d="M0 5c7 4 12 0 17 2-1 2-4 1-5 4-1-1-3 1-3 2C7 10 4 7 0 5z" fill="#fbf8f2"/><path d="M10 14c3 3 8 4 16 4-3 4-8 4-12 3-2-1-3-4-4-7z" fill="#d9541a"/><text x="-1" y="27" font-size="7" font-weight="600" fill="#b78a1e">PRO</text></svg>
  <span>{69} "调解协议" "生效"</span>
</div>
</main>
<script src="https://cdn.jsdelivr.net/npm/bootstrap@5.3.0/dist/js/bootstrap.bundle.min.js"></script>
</body>
</html>
